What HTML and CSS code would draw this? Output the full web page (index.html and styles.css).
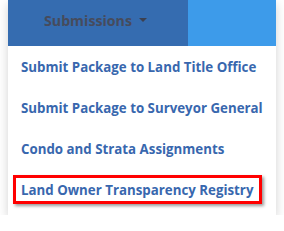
FILE: index.html
```html
<!DOCTYPE html>
<html>
<head>
<meta charset="utf-8">
<link rel="stylesheet" href="styles.css">
</head>
<body>
<div class="menu">
  <div class="topbar">
    <div class="tab">
      <span class="tab-label">Submissions</span>
      <span class="caret"></span>
    </div>
    <div class="rest"></div>
  </div>
  <ul class="items">
    <li class="item"><span class="label">Submit Package to Land Title Office</span></li>
    <li class="item"><span class="label">Submit Package to Surveyor General</span></li>
    <li class="item"><span class="label">Condo and Strata Assignments</span></li>
    <li class="item"><span class="label highlight">Land Owner Transparency Registry</span></li>
  </ul>
</div>
</body>
</html>
```
FILE: styles.css
```css
html, body {
  margin: 0;
  padding: 0;
  background: #ffffff;
}
body {
  font-family: "Open Sans", "Liberation Sans", sans-serif;
}
.menu {
  width: 268px;
  margin-left: 8px;
  background: #ffffff;
  box-shadow: 0 4px 10px rgba(0, 0, 0, 0.18);
}
.topbar {
  display: flex;
  height: 46px;
}
.tab {
  width: 180px;
  background: #356cb0;
  display: flex;
  align-items: center;
  padding-left: 36px;
  gap: 7px;
  padding-bottom: 6px;
  box-sizing: border-box;
}
.tab-label {
  font-size: 14.2px;
  font-weight: 700;
  color: #464b5c;
}
.caret {
  width: 0;
  height: 0;
  border-left: 4px solid transparent;
  border-right: 4px solid transparent;
  border-top: 4px solid #3c4050;
}
.rest {
  flex: 1;
  background: #3d9bea;
}
.items {
  list-style: none;
  margin: 0;
  padding: 0 0 5px 0;
}
.item {
  height: 41px;
  display: flex;
  align-items: center;
}
.label {
  font-size: 13.3px;
  font-weight: 700;
  color: #3867ae;
  padding-left: 13px;
  white-space: nowrap;
}
.highlight {
  box-sizing: border-box;
  margin-left: 5px;
  width: 249px;
  height: 29px;
  padding-left: 5px;
  border: 3px solid #ff0000;
  display: flex;
  align-items: center;
  box-shadow: 2px 2px 3px rgba(0, 0, 0, 0.4);
}
```
